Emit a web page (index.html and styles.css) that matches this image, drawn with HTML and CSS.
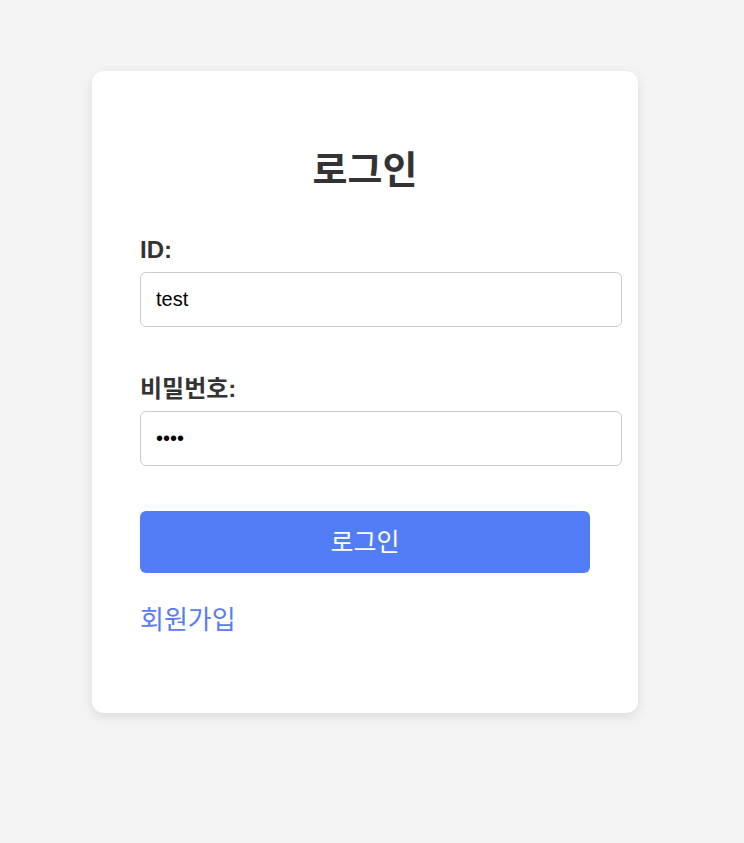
FILE: index.html
```html
<!DOCTYPE html>
<html lang="ko">
<head>
<meta charset="utf-8">
<title>로그인</title>
<link rel="stylesheet" href="styles.css">
</head>
<body>
<div class="page">
  <form class="card">
    <h2 class="title">로그인</h2>
    <div class="field">
      <label class="label" for="id">ID:</label>
      <input class="input" id="id" type="text" value="test">
    </div>
    <div class="field">
      <label class="label" for="pw">비밀번호:</label>
      <input class="input" id="pw" type="password" value="test">
    </div>
    <button class="btn" type="button">로그인</button>
    <a class="link" href="#">회원가입</a>
  </form>
</div>
</body>
</html>
```
FILE: styles.css
```css
html, body {
  margin: 0;
  padding: 0;
  background: #f4f4f4;
}
body {
  font-family: "Liberation Sans", Arial, "Noto Sans CJK KR", sans-serif;
  color: #333;
}
.page {
  padding: 71px 0 0 92px;
  min-height: 843px;
  box-sizing: border-box;
}
.card {
  width: 546px;
  box-sizing: border-box;
  padding: 48px 48px 78px;
  background: #fff;
  border-radius: 12px;
  box-shadow: 0 4px 12px rgba(0, 0, 0, 0.1);
  display: flex;
  flex-direction: column;
}
.title {
  margin: 29px 0 44px;
  font-size: 38px;
  line-height: 44px;
  font-weight: bold;
  text-align: center;
  color: #333;
}
.field {
  display: flex;
  flex-direction: column;
  margin-bottom: 46px;
}
.field + .field {
  margin-top: 2px;
  margin-bottom: 45px;
}
.label {
  font-size: 24px;
  line-height: 28px;
  font-weight: bold;
  color: #333;
  margin-bottom: 8px;
}
.input {
  width: 450px;
  box-sizing: content-box;
  padding: 15px;
  font-family: "Liberation Sans", Arial, sans-serif;
  font-size: 20px;
  line-height: 23px;
  height: 23px;
  border: 1px solid #ccc;
  border-radius: 6px;
  color: #000;
  background: #fff;
  margin: 0;
  outline: none;
}
.btn {
  height: 62px;
  width: 100%;
  border: none;
  border-radius: 6px;
  background: #537df6;
  color: #fff;
  font-family: inherit;
  font-size: 25px;
  line-height: 30px;
  cursor: pointer;
  padding: 0;
}
.link {
  align-self: flex-start;
  margin-top: 32px;
  font-size: 26px;
  line-height: 30px;
  color: #5a7cf0;
  text-decoration: none;
}
```
